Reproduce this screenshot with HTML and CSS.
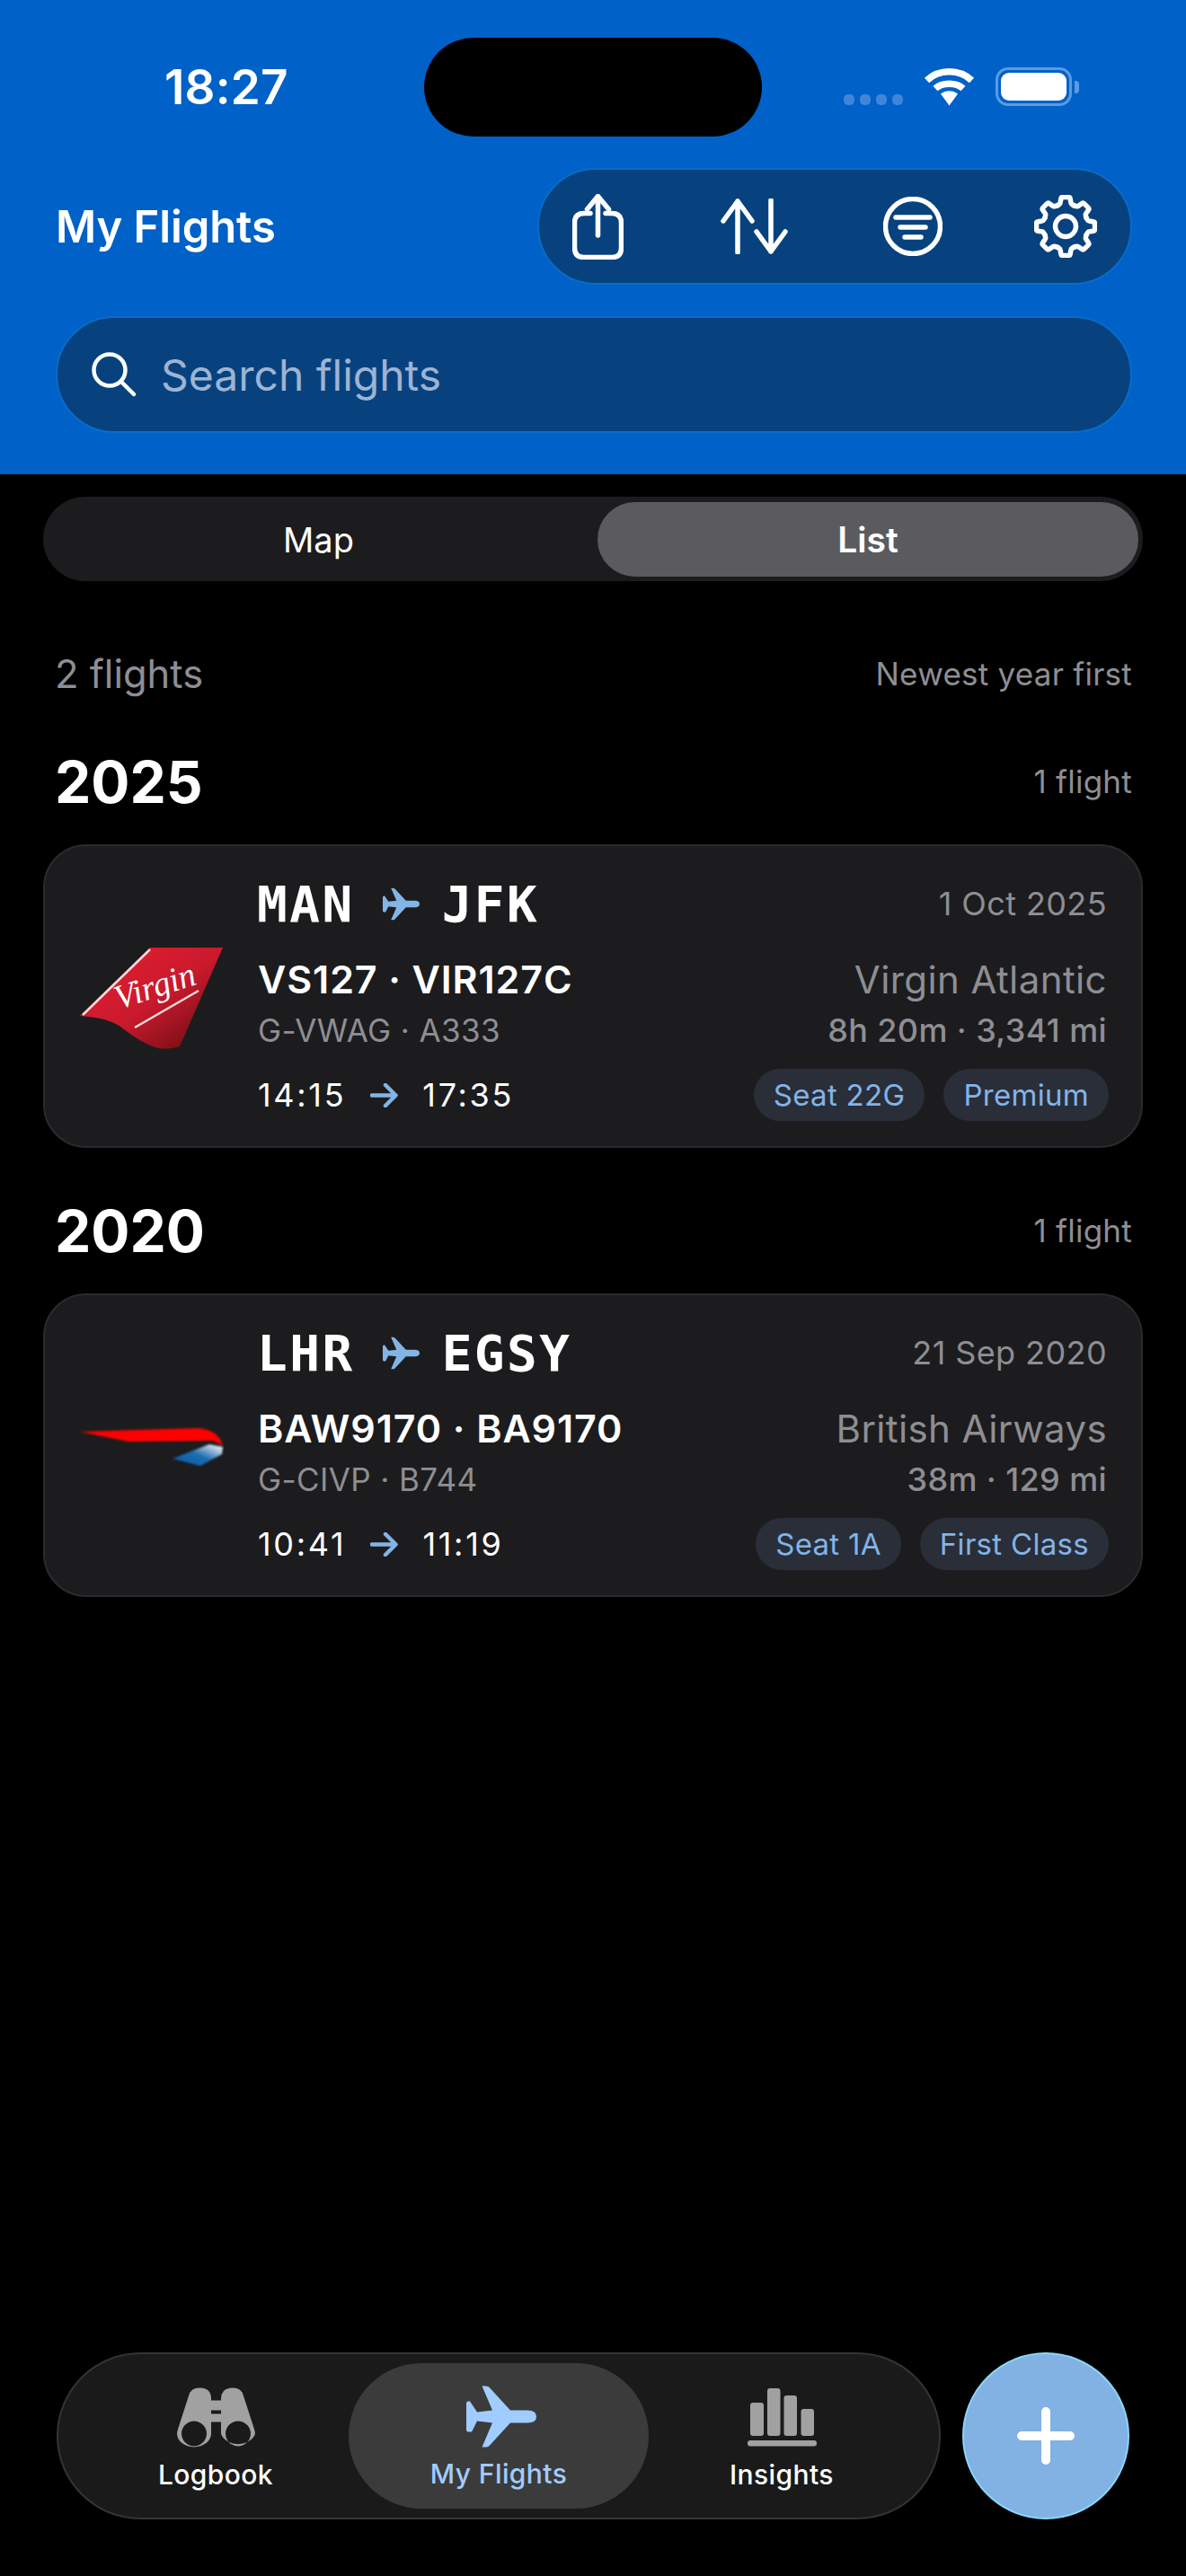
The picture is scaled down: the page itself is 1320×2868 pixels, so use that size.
FILE: index.html
```html
<!DOCTYPE html>
<html lang="en">
<head>
<meta charset="utf-8">
<title>My Flights</title>
<link rel="stylesheet" href="styles.css">
</head>
<body>
<svg class="defs" width="0" height="0" aria-hidden="true">
  <defs>
    <symbol id="plane" viewBox="0 0 78 68">
      <path d="M17.5 0H22Q25 0 27 3L49 27H68Q78 27 78 34Q78 41 68 41H49L27 65Q25 68 22 68H17.5L29 41L12 39L6 51H2Q0 51 0 48V20Q0 17 2 17H4L12 29L29 27Z"/>
    </symbol>
    <linearGradient id="virginFill" x1="0.25" y1="0.2" x2="0.85" y2="0.8">
      <stop offset="0" stop-color="#dc1c30"/>
      <stop offset="0.5" stop-color="#c91a2c"/>
      <stop offset="1" stop-color="#85101a"/>
    </linearGradient>
    <linearGradient id="baBlue" x1="0.1" y1="0.9" x2="0.95" y2="0.1">
      <stop offset="0" stop-color="#0a5aa8"/>
      <stop offset="0.5" stop-color="#1f6db0"/>
      <stop offset="1" stop-color="#e8eef4"/>
    </linearGradient>
    <filter id="soft" x="-5%" y="-20%" width="110%" height="140%"><feGaussianBlur stdDeviation="1"/></filter>
  </defs>
</svg>

<header class="top">
  <div class="island"></div>
  <div class="status">
    <span class="clock">18:27</span>
    <div class="status-icons">
      <div class="signal"><i></i><i></i><i></i><i></i></div>
      <svg class="wifi" width="57" height="43" viewBox="0 0 57 43">
        <path class="wifi-arc" d="M3.5 14.5C17 1.5 40 1.5 53.5 14.5"/>
        <path class="wifi-arc" d="M13 23.5C21 16.5 36 16.5 44 23.5"/>
        <path class="wifi-fill" d="M19 29.5C24 25 33 25 38 29.5L28.5 42.5Z"/>
      </svg>
      <div class="battery"><div class="battery-level"></div></div>
    </div>
  </div>
  <div class="title-row">
    <h1 class="title">My Flights</h1>
    <div class="toolbar">
      <svg class="tool tool-share" width="57" height="73" viewBox="0 0 57 73">
        <path d="M20 21.5H13Q2.500 21.500 2.500 32V60Q2.500 70.500 13 70.500H44Q54.500 70.500 54.500 60V32Q54.500 21.500 44 21.500H37"/>
        <path d="M28.500 46V2.500M16.500 17L28.500 2.500L40.500 17"/>
      </svg>
      <svg class="tool tool-sort" width="76" height="62" viewBox="0 0 76 62">
        <path d="M19 60V3M3 25L19 3L35 25"/>
        <path d="M56 2V59M40 37L56 59L72 37"/>
      </svg>
      <svg class="tool tool-filter" width="66" height="66" viewBox="0 0 66 66">
        <circle cx="33" cy="33" r="30.500"/>
        <path d="M14 23H52M19 34H47M24 45H42"/>
      </svg>
      <svg class="tool tool-gear" width="70" height="70" viewBox="0 0 70 70">
        <circle cx="35" cy="35" r="11.500"/>
        <g id="gearTeeth">
          <path id="tooth" d="M25.400 12L28 10.500Q29 10 29.200 8L29.800 4.500Q30 2.500 32 2.500H38Q40 2.500 40.200 4.500L40.800 8Q41 10 42 10.500L44.600 12"/>
          <use href="#tooth" transform="rotate(45 35 35)"/>
          <use href="#tooth" transform="rotate(90 35 35)"/>
          <use href="#tooth" transform="rotate(135 35 35)"/>
          <use href="#tooth" transform="rotate(180 35 35)"/>
          <use href="#tooth" transform="rotate(225 35 35)"/>
          <use href="#tooth" transform="rotate(270 35 35)"/>
          <use href="#tooth" transform="rotate(315 35 35)"/>
        </g>
      </svg>
    </div>
  </div>
  <div class="search">
    <svg class="tool search-icon" width="50" height="50" viewBox="0 0 50 50">
      <circle cx="20" cy="20" r="17.500"/>
      <path d="M33 33L47 47"/>
    </svg>
    <span class="search-text">Search flights</span>
  </div>
</header>

<main class="content">
  <div class="segments">
    <div class="segment segment-off">Map</div>
    <div class="segment segment-on">List</div>
  </div>

  <div class="list-head">
    <span class="count">2 flights</span>
    <span class="sorting">Newest year first</span>
  </div>

  <section class="year">
    <div class="year-head"><h2 class="year-label">2025</h2><span class="sorting">1 flight</span></div>
    <article class="card">
      <div class="logo">
        <svg width="160" height="114" viewBox="0 0 160 114">
          <path fill="url(#virginFill)" d="M79 1H160L112 111Q100 115 88 113Q70 108 50 92Q35 79 1 77Z"/>
          <path class="virgin-line" d="M4 76L79 3"/>
          <path class="virgin-line" d="M62 90L133 49"/>
          <text class="virgin-word" x="44" y="70" transform="rotate(-18 44 70)">Virgin</text>
        </svg>
      </div>
      <div class="info">
        <div class="row row-route">
          <div class="route"><span class="code">MAN</span><svg class="route-plane" width="41" height="37"><use href="#plane"/></svg><span class="code">JFK</span></div>
          <span class="date">1 Oct 2025</span>
        </div>
        <div class="row row-flight">
          <span class="flight-no">VS127 · VIR127C</span>
          <span class="airline">Virgin Atlantic</span>
        </div>
        <div class="row row-meta">
          <span class="tail">G-VWAG · A333</span>
          <span class="stats">8h 20m · 3,341 mi</span>
        </div>
        <div class="row row-times">
          <div class="times"><span>14:15</span><svg class="time-arrow" width="31" height="27" viewBox="0 0 31 27"><path d="M2 13.500H28M17 2L28.500 13.500L17 25"/></svg><span>17:35</span></div>
          <div class="tags"><span class="tag">Seat 22G</span><span class="tag">Premium</span></div>
        </div>
      </div>
    </article>
  </section>

  <section class="year">
    <div class="year-head"><h2 class="year-label">2020</h2><span class="sorting">1 flight</span></div>
    <article class="card">
      <div class="logo">
        <svg width="161" height="44" viewBox="0 0 161 44">
          <g filter="url(#soft)">
            <path class="ba-red" d="M1 5L132 1Q155 3 160 20L149 15L55 16Z"/>
            <path fill="url(#baBlue)" d="M104 35L145 19L160 22L159 30L135 43Z"/>
          </g>
        </svg>
      </div>
      <div class="info">
        <div class="row row-route">
          <div class="route"><span class="code">LHR</span><svg class="route-plane" width="41" height="37"><use href="#plane"/></svg><span class="code">EGSY</span></div>
          <span class="date">21 Sep 2020</span>
        </div>
        <div class="row row-flight">
          <span class="flight-no">BAW9170 · BA9170</span>
          <span class="airline">British Airways</span>
        </div>
        <div class="row row-meta">
          <span class="tail">G-CIVP · B744</span>
          <span class="stats">38m · 129 mi</span>
        </div>
        <div class="row row-times">
          <div class="times"><span>10:41</span><svg class="time-arrow" width="31" height="27" viewBox="0 0 31 27"><path d="M2 13.500H28M17 2L28.500 13.500L17 25"/></svg><span>11:19</span></div>
          <div class="tags"><span class="tag">Seat 1A</span><span class="tag">First Class</span></div>
        </div>
      </div>
    </article>
  </section>
</main>

<footer class="dock">
  <nav class="tabs">
    <div class="tab">
      <svg class="tab-icon" width="87" height="66" viewBox="0 0 87 66">
        <path fill-rule="evenodd" d="M13 9Q15 0 25 0Q38 0 38 12V14H49V12Q49 0 62 0Q72 0 74 9L86 46Q87 50 87 51A19.500 15 0 0 1 49 51V38H38V51A19 15 0 0 1 0 51Q0 50 1 46ZM19 37A14 14 0 1 0 19.010 37ZM68 37A14 14 0 1 0 68.010 37ZM38 25V29H49V25Z"/>
      </svg>
      <span class="tab-label">Logbook</span>
    </div>
    <div class="tab tab-on">
      <svg class="tab-icon" width="78" height="68"><use href="#plane"/></svg>
      <span class="tab-label">My Flights</span>
    </div>
    <div class="tab">
      <svg class="tab-icon" width="77" height="65" viewBox="0 0 77 65">
        <rect x="3" y="16" width="15" height="37" rx="3"/>
        <rect x="22" y="0" width="14.500" height="53" rx="3"/>
        <rect x="40.500" y="8" width="14.500" height="45" rx="3"/>
        <rect x="59.500" y="23" width="14.500" height="30" rx="3"/>
        <rect x="0" y="58" width="77" height="6.500" rx="3"/>
      </svg>
      <span class="tab-label">Insights</span>
    </div>
  </nav>
  <div class="fab">
    <svg width="64" height="64" viewBox="0 0 64 64"><path d="M5 32H59M32 5V59"/></svg>
  </div>
</footer>
</body>
</html>
```
FILE: styles.css
```css
* { box-sizing: border-box; }
html, body { margin: 0; padding: 0; }
body {
  width: 1320px;
  height: 2868px;
  background: #000;
  color: #fff;
  font-family: Inter, "Noto Sans", sans-serif;
  display: flex;
  flex-direction: column;
  overflow: hidden;
}
.defs { position: absolute; }

/* header */
.top {
  position: relative;
  height: 528px;
  background: #0061c8;
  padding: 0 60px 0 62px;
}
.island {
  position: absolute;
  left: 472px;
  top: 42px;
  width: 376px;
  height: 110px;
  border-radius: 55px;
  background: #000;
}
.status {
  height: 187px;
  display: flex;
  align-items: flex-start;
  padding: 75px 67px 0 121px;
  justify-content: space-between;
}
.clock { font-size: 53px; line-height: 44px; font-weight: 600; letter-spacing: 0.2px; }
.status-icons { display: flex; align-items: flex-end; gap: 23px; height: 43px; }
.signal { display: flex; gap: 6px; padding-bottom: 1px; }
.signal i { width: 12px; height: 12px; border-radius: 5px; background: #3f86d8; }
.wifi-arc { fill: none; stroke: #fff; stroke-width: 7.5; }
.wifi-fill { fill: #fff; }
.battery {
  position: relative;
  width: 85px;
  height: 43px;
  border: 3px solid #5c9be0;
  border-radius: 14px;
  padding: 3px;
}
.battery::after {
  content: "";
  position: absolute;
  right: -11px;
  top: 12px;
  width: 5px;
  height: 14px;
  border-radius: 0 4px 4px 0;
  background: #5c9be0;
}
.battery-level { height: 100%; background: #fff; border-radius: 9px; }
.title-row { display: flex; align-items: center; justify-content: space-between; height: 130px; }
.title { margin: 0; font-size: 49px; font-weight: 600; letter-spacing: -0.1px; }
.toolbar {
  width: 662px;
  height: 130px;
  border-radius: 65px;
  background: #07427f;
  border: 2px solid #0a6cc6;
  display: flex;
  align-items: center;
  padding: 0 0 0 37px;
}
.tool { fill: none; stroke: #fff; stroke-width: 5.5; stroke-linecap: round; stroke-linejoin: round; flex: none; }
.tool-sort { margin-left: 108px; }
.tool-filter { margin-left: 105px; }
.tool-gear { margin-left: 102px; }
.search {
  margin-top: 35px;
  height: 130px;
  border-radius: 65px;
  background: #07427f;
  border: 2px solid #0a6cc6;
  display: flex;
  align-items: center;
  padding-left: 38px;
  gap: 27px;
}
.search-icon { stroke-width: 4.5; }
.search-text { font-size: 48px; color: #9db4d2; }

/* content */
.content { padding: 25px 48px 0 48px; }
.segments {
  height: 94px;
  border-radius: 47px;
  background: #1c1c1e;
  display: flex;
  padding: 6px 5px 5px 6px;
}
.segment {
  display: flex;
  align-items: center;
  justify-content: center;
  font-size: 38px;
  font-weight: 500;
  border-radius: 42px;
}
.segment-off { flex: 1; padding-right: 10px; font-weight: 400; }
.segment-on { width: 602px; background: #5b5b5f; font-weight: 600; font-size: 39px; }
.list-head {
  height: 60px;
  margin-top: 73px;
  padding: 0 12px 0 13px;
  display: flex;
  justify-content: space-between;
  align-items: center;
}
.count { font-size: 43.5px; color: #8e8e93; }
.sorting { font-size: 35px; color: #8e8e93; letter-spacing: 0.25px; }
.year { margin-top: 50px; }
.year + .year { margin-top: 52px; }
.year-head {
  height: 80px;
  padding: 0 12px 0 13px;
  display: flex;
  justify-content: space-between;
  align-items: center;
  margin-bottom: 30px;
}
.year-label { margin: 0; font-size: 64px; font-weight: 700; }

/* cards */
.card {
  height: 338px;
  border: 2px solid #2b2b2d;
  border-radius: 48px;
  background: #1c1c1e;
  display: flex;
  padding: 34px 38px 0 0;
}
.logo {
  width: 237px;
  height: 270px;
  flex: none;
  display: flex;
  align-items: center;
  padding-left: 38px;
}
.logo svg { display: block; overflow: visible; }
.virgin-line { fill: none; stroke: #f4d9dc; stroke-width: 2.5; }
.virgin-word { font-family: "Liberation Serif", serif; font-style: italic; font-size: 38px; fill: #fff; }
.ba-red { fill: #ff0000; }
.info { flex: 1; min-width: 0; display: flex; flex-direction: column; }
.row { display: flex; justify-content: space-between; align-items: center; }
.row-route { height: 60px; }
.row-flight { height: 48px; margin-top: 30px; }
.row-meta { height: 46px; margin-top: 10px; }
.row-times { height: 58px; margin-top: 20px; margin-right: -2px; }
.route { display: flex; align-items: center; margin-left: -1px; }
.code { font-family: "DejaVu Sans Mono", monospace; font-weight: 700; font-size: 56px; letter-spacing: 2.5px; }
.route-plane { fill: #82b4e6; margin: 0 25px 0 31px; flex: none; }
.date { font-size: 36px; color: #8e8e93; letter-spacing: 0.4px; }
.flight-no { font-size: 43px; font-weight: 600; letter-spacing: 0.9px; }
.airline { font-size: 42px; color: #8e8e93; letter-spacing: 0.4px; }
.tail { font-size: 35px; color: #8e8e93; letter-spacing: 0.4px; }
.stats { font-size: 36px; font-weight: 500; color: #8e8e93; letter-spacing: 0.4px; }
.times { display: flex; align-items: center; gap: 27px; font-size: 36px; letter-spacing: 2.7px; }
.time-arrow { fill: none; stroke: #82b4e6; stroke-width: 4.5; stroke-linecap: round; stroke-linejoin: round; }
.tags { display: flex; gap: 21px; }
.tag {
  height: 58px;
  border-radius: 29px;
  background: #2a2e38;
  color: #82b4e8;
  font-size: 33px;
  letter-spacing: 0.3px;
  display: flex;
  align-items: center;
  padding: 0 22px;
}

/* dock */
.dock {
  margin-top: auto;
  padding: 0 63px 63px 63px;
  display: flex;
  gap: 24px;
}
.tabs {
  width: 984px;
  height: 186px;
  border-radius: 93px;
  background: #1a1a1a;
  border: 2px solid #343434;
  display: flex;
  align-items: center;
  padding-left: 30px;
  gap: 3px;
}
.tab {
  width: 290px;
  height: 162px;
  display: flex;
  flex-direction: column;
  align-items: center;
  justify-content: flex-start;
  padding-top: 26px;
  border-radius: 81px;
}
.tab:nth-child(2) { width: 334px; padding-top: 25px; }
.tab-on { background: #3b3b3b; }
.tab-icon { fill: #a1a1a1; height: 69px; flex: none; }
.tab-on .tab-icon { fill: #a1ccff; margin-left: 6px; }
.tab-label { font-size: 30px; font-weight: 500; line-height: 38px; margin-top: 10px; letter-spacing: 0.4px; }
.tab-on .tab-label { color: #a1ccff; }
.fab {
  width: 186px;
  height: 186px;
  border-radius: 50%;
  background: #82b1e3;
  border: 2px solid #8ad6f6;
  display: flex;
  align-items: center;
  justify-content: center;
}
.fab svg { fill: none; stroke: #fff; stroke-width: 10; stroke-linecap: round; }
```
